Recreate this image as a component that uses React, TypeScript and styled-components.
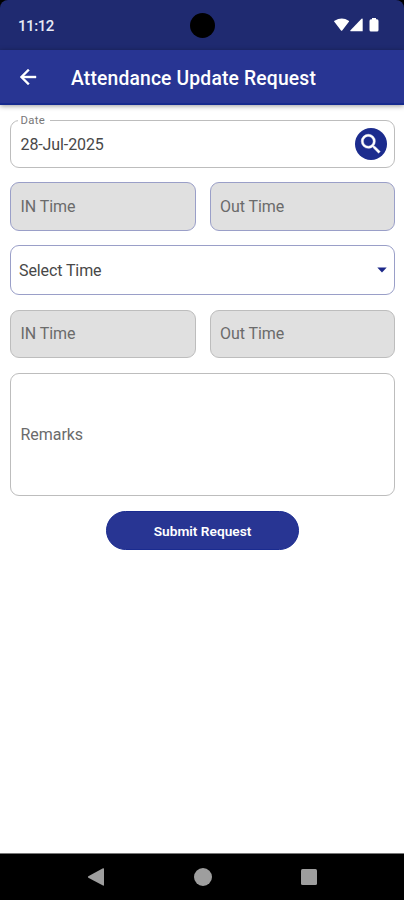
import React from "react";
import styled, { createGlobalStyle } from "styled-components";

const GlobalStyle = createGlobalStyle`
  * { box-sizing: border-box; }
  body { margin: 0; background: #000; font-family: Roboto, "Liberation Sans", sans-serif; }
  button { font-family: inherit; }
`;

const Screen = styled.div`
  width: 404px;
  height: 900px;
  display: flex;
  flex-direction: column;
  overflow: hidden;
  background: #000;
`;

const StatusBar = styled.header`
  height: 50px;
  flex: none;
  display: grid;
  grid-template-columns: 1fr 26px 1fr;
  align-items: center;
  padding: 0 23px 0 18px;
  background: #1f2a70;
  border-radius: 8px 8px 0 0;
  color: #e8eaf6;
`;

const Clock = styled.span`
  font-size: 15px;
  font-weight: 500;
  line-height: 20px;
  letter-spacing: -0.45px;
  padding-top: 2px;
`;

const Camera = styled.span`
  width: 25px;
  height: 25px;
  margin-left: 3px;
  border-radius: 50%;
  background: #000;
`;

const StatusIcons = styled.svg`
  justify-self: end;
  display: block;
`;

const AppBar = styled.div`
  height: 55px;
  flex: none;
  display: flex;
  align-items: center;
  padding-left: 16px;
  background: #283593;
  border-bottom: 2px solid #162a8e;
  box-shadow: 0 1px 5px rgba(0, 0, 0, 0.4);
  z-index: 1;
`;

const BackButton = styled.button`
  width: 24px;
  height: 24px;
  margin-top: 1px;
  padding: 0;
  border: 0;
  background: none;
  color: #fff;
  svg { display: block; }
`;

const Title = styled.h1`
  margin: 4px 0 0 31px;
  font-size: 19.3px;
  font-weight: 500;
  line-height: 24px;
  letter-spacing: 0.17px;
  color: #fff;
  white-space: nowrap;
`;

const Form = styled.main`
  flex: 1;
  display: flex;
  flex-direction: column;
  padding: 15px 9px 0 10px;
  background: #fff;
`;

const Box = styled.div<{ $h: number; $tone?: "indigo" | "grey"; $filled?: boolean }>`
  display: flex;
  align-items: center;
  justify-content: space-between;
  flex: 1;
  min-height: ${(p) => p.$h}px;
  padding: 0 7px 0 9.5px;
  border: 1px solid ${(p) => (p.$tone === "indigo" ? "#9a9fc8" : "#bdbdbd")};
  border-radius: 9px;
  background: ${(p) => (p.$filled ? "#e0e0e0" : "#fff")};
`;

const FieldText = styled.span<{ $dark?: boolean }>`
  font-size: 16px;
  line-height: 20px;
  letter-spacing: ${(p) => (p.$dark ? "-0.1px" : "-0.05px")};
  color: ${(p) => (p.$dark ? "#484848" : "#6b6b6b")};
`;

const DateBox = styled.fieldset`
  height: 55px;
  margin: -7px 0 0;
  min-width: 0;
  padding: 0 7px 0 9.5px;
  border: 1px solid #bdbdbd;
  border-radius: 9px;
`;

const DateLabel = styled.legend`
  margin-left: -3px;
  padding: 1px 5px 0 3px;
  height: 14px;
  font-size: 11.3px;
  line-height: 14px;
  letter-spacing: 0.3px;
  color: #777;
`;

const DateValue = styled.div`
  height: 34px;
  display: flex;
  align-items: center;
  justify-content: space-between;
  ${FieldText} { padding-top: 1px; }
`;

const SearchButton = styled.button`
  width: 32px;
  height: 32px;
  padding: 0;
  border: 0;
  border-radius: 50%;
  display: grid;
  place-items: center;
  background: #1c2c8e;
  color: #fff;
`;

const Pair = styled.div<{ $top: number; $h: number }>`
  display: flex;
  gap: 14px;
  height: ${(p) => p.$h}px;
  margin-top: ${(p) => p.$top}px;
`;

const SelectRow = styled.div`
  display: flex;
  height: 50px;
  margin-top: 14px;
  ${Box} { padding-left: 8px; }
  ${FieldText} { padding-top: 1px; }
`;

const RemarksRow = styled.div`
  display: flex;
  height: 123px;
  margin-top: 15px;
`;

const Submit = styled.button`
  align-self: center;
  width: 193px;
  height: 39px;
  margin-top: 15px;
  padding: 0;
  border: 1px solid #1a2b90;
  border-radius: 20px;
  background: #283593;
  color: #fff;
  font-size: 13.7px;
  font-weight: 600;
  line-height: 18px;
`;

const NavBar = styled.nav`
  height: 47px;
  flex: none;
  border-top: 1px solid #777;
  background: #000;
  display: flex;
  align-items: center;
  justify-content: space-between;
  padding: 0 86px 0 87px;
  svg { display: block; }
`;

export default function App() {
  return (
    <Screen>
      <GlobalStyle />
      <StatusBar>
        <Clock>11:12</Clock>
        <Camera />
        <StatusIcons width="48" height="16" viewBox="0 0 48 16" fill="#fff">
          <path d="M1.5 5 Q0.7 4.4 1.5 3.7 Q9 -0.8 15.7 3.7 Q16.5 4.4 15.7 5 L9.2 13.5 Q8.6 14.2 8 13.5Z" />
          <path d="M29.7 2 V14.3 H17.8 Q16.6 14.2 17.5 13.2 L28.5 1.8 Q29.5 1 29.7 2Z" />
          <path d="M39 1 H43 V2.3 H44 Q45.5 2.3 45.5 4 V13 Q45.5 14.5 44 14.5 H38 Q36.5 14.5 36.5 13 V4 Q36.5 2.3 38 2.3 H39Z" />
        </StatusIcons>
      </StatusBar>
      <AppBar>
        <BackButton aria-label="Back">
          <svg width="24" height="24" viewBox="0 0 24 24" fill="currentColor" stroke="currentColor" strokeWidth="0.4">
            <path d="M20 11H7.83l5.59-5.59L12 4l-8 8 8 8 1.41-1.41L7.83 13H20v-2z" />
          </svg>
        </BackButton>
        <Title>Attendance Update Request</Title>
      </AppBar>
      <Form>
        <DateBox>
          <DateLabel>Date</DateLabel>
          <DateValue>
            <FieldText $dark>28-Jul-2025</FieldText>
            <SearchButton aria-label="Search">
              <svg width="26" height="26" viewBox="0 0 24 24" fill="currentColor" stroke="currentColor" strokeWidth="0.4">
                <path d="M15.5 14h-.79l-.28-.27A6.471 6.471 0 0 0 16 9.5 6.5 6.5 0 1 0 9.5 16c1.61 0 3.09-.59 4.23-1.57l.27.28v.79l5 4.99L20.49 19l-4.99-5zm-6 0C7.01 14 5 11.99 5 9.5S7.01 5 9.5 5 14 7.01 14 9.5 11.99 14 9.5 14z" />
              </svg>
            </SearchButton>
          </DateValue>
        </DateBox>
        <Pair $top={14} $h={49}>
          <Box $h={49} $tone="indigo" $filled><FieldText>IN Time</FieldText></Box>
          <Box $h={49} $tone="indigo" $filled><FieldText>Out Time</FieldText></Box>
        </Pair>
        <SelectRow>
          <Box $h={50} $tone="indigo">
            <FieldText $dark>Select Time</FieldText>
            <svg width="10" height="6" viewBox="0 0 10 6" fill="#1c2889">
              <path d="M0.3 0.5H9.7L5 5.5Z" />
            </svg>
          </Box>
        </SelectRow>
        <Pair $top={15} $h={48}>
          <Box $h={48} $filled><FieldText>IN Time</FieldText></Box>
          <Box $h={48} $filled><FieldText>Out Time</FieldText></Box>
        </Pair>
        <RemarksRow>
          <Box $h={123}><FieldText>Remarks</FieldText></Box>
        </RemarksRow>
        <Submit>Submit Request</Submit>
      </Form>
      <NavBar>
        <svg width="18" height="18" viewBox="0 0 18 18" fill="#9e9e9e">
          <path d="M1.3 8.3 L16 0.3 Q17 0 17 1 V17 Q17 18 16 17.6 L1.3 9.7 Q0.4 9 1.3 8.3Z" />
        </svg>
        <svg width="18" height="18" viewBox="0 0 18 18" fill="#9e9e9e">
          <circle cx="9" cy="9" r="9" />
        </svg>
        <svg width="18" height="18" viewBox="0 0 18 18" fill="#9e9e9e">
          <rect x="1" y="1" width="16" height="16" rx="1.5" />
        </svg>
      </NavBar>
    </Screen>
  );
}
